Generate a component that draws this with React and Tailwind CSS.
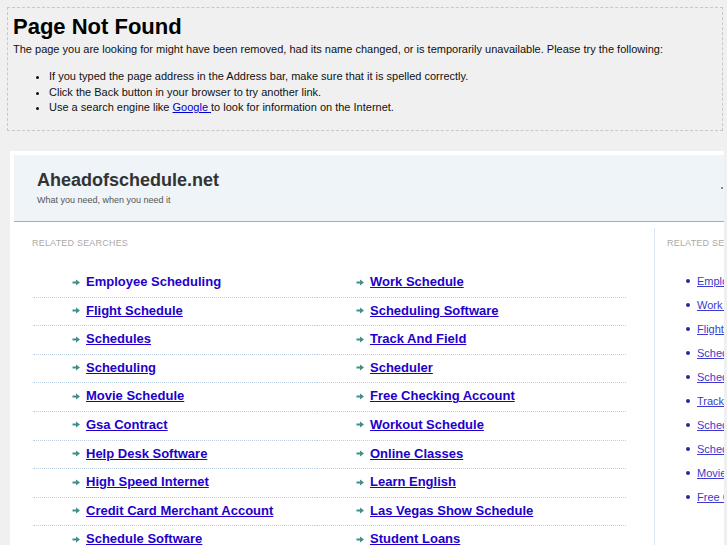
import React from 'react';

const leftLinks = [
  'Employee Scheduling',
  'Flight Schedule',
  'Schedules',
  'Scheduling',
  'Movie Schedule',
  'Gsa Contract',
  'Help Desk Software',
  'High Speed Internet',
  'Credit Card Merchant Account',
  'Schedule Software',
];

const rightLinks = [
  'Work Schedule',
  'Scheduling Software',
  'Track And Field',
  'Scheduler',
  'Free Checking Account',
  'Workout Schedule',
  'Online Classes',
  'Learn English',
  'Las Vegas Show Schedule',
  'Student Loans',
];

const sideLinks = [
  'Employee Scheduling',
  'Work Schedule',
  'Flight Schedule',
  'Schedules',
  'Scheduling',
  'Track And Field',
  'Scheduling Software',
  'Scheduler',
  'Movie Schedule',
  'Free Checking Account',
];

function Arrow() {
  return (
    <svg width="8" height="7" viewBox="0 0 8 7" className="shrink-0">
      <path d="M0.5 3.5H5" stroke="#3f8f86" strokeWidth="2" />
      <path d="M4 0.5L8 3.5L4 6.5Z" fill="#3f8f86" />
    </svg>
  );
}

function LinkColumn({ items, first }) {
  return (
    <ul>
      {items.map((item, i) => (
        <li
          key={item}
          className="h-[28.6px] box-border border-b border-dotted border-[#b9cde3] pl-[39px] pt-[5px] flex items-start gap-[6px]"
        >
          <span className="h-[16px] flex items-center">
            <Arrow />
          </span>
          <a
            href="#"
            className={`text-[13px] leading-[16px] font-bold text-[#2200cc] whitespace-nowrap ${first && i === 0 ? 'no-underline' : 'underline'}`}
          >
            {item}
          </a>
        </li>
      ))}
    </ul>
  );
}

export default function App() {
  return (
    <div
      className="w-[727px] h-[545px] overflow-hidden bg-[#f0f0f0] text-black"
      style={{ fontFamily: '"Liberation Sans", Arial, sans-serif' }}
    >
      {/* Error box */}
      <div className="ml-[7px] mt-[7px] w-[716px] h-[124px] border border-dashed border-[#c8c8c8] px-[5px]">
        <h1 className="text-[22px] leading-[26px] font-bold pt-[6px]">Page Not Found</h1>
        <p className="text-[11px] leading-[14px] mt-[2px] text-[#111]">
          The page you are looking for might have been removed, had its name changed, or is temporarily unavailable. Please try the following:
        </p>
        <ul className="list-disc pl-[36px] mt-[13px] text-[11px] leading-[15.5px] text-[#111]">
          <li>If you typed the page address in the Address bar, make sure that it is spelled correctly.</li>
          <li>Click the Back button in your browser to try another link.</li>
          <li>
            Use a search engine like{' '}
            <a href="#" className="text-[#0000cc] underline">Google </a>
            to look for information on the Internet.
          </li>
        </ul>
      </div>

      {/* Parked domain panel */}
      <div className="ml-[10px] mt-[20px] w-[714px] h-[400px] bg-white pt-[4px] pl-[4px] overflow-hidden">
        <div className="h-[67px] box-border bg-[#eef4f7] border-b border-[#8db1e6] pl-[23px] pt-[14px] relative">
          <div className="text-[18px] leading-[22px] font-bold text-[#333]">Aheadofschedule.net</div>
          <div className="text-[9px] leading-[12px] mt-[3px] text-[#555]">What you need, when you need it</div>
          <span className="absolute right-[1px] top-[32px] w-[2px] h-[2px] bg-[#888]" />
        </div>

        <div className="flex">
          {/* Main column */}
          <div className="w-[640px] shrink-0 pt-[15px]">
            <div className="pl-[18px] text-[9px] leading-[12px] text-[#aaa] tracking-[0.2px]">RELATED SEARCHES</div>
            <div className="ml-[19px] mt-[20px] grid grid-cols-[284px_309px]">
              <LinkColumn items={leftLinks} first />
              <LinkColumn items={rightLinks} />
            </div>
          </div>

          {/* Side column */}
          <div className="mt-[6px] border-l border-[#dce6f4] pl-[12px] pt-[9px] w-[200px] shrink-0 h-[330px]">
            <div className="text-[9px] leading-[12px] text-[#aaa] tracking-[0.2px] whitespace-nowrap">RELATED SEARCHES</div>
            <ul className="mt-[20px]">
              {sideLinks.map((item) => (
                <li key={item} className="h-[24px] flex items-center gap-[7px] ml-[19px]">
                  <span className="w-[4px] h-[4px] rounded-full bg-[#2a2aa0] shrink-0" />
                  <a href="#" className="text-[11px] text-[#3b3bd0] underline whitespace-nowrap">{item}</a>
                </li>
              ))}
            </ul>
          </div>
        </div>
      </div>
    </div>
  );
}
